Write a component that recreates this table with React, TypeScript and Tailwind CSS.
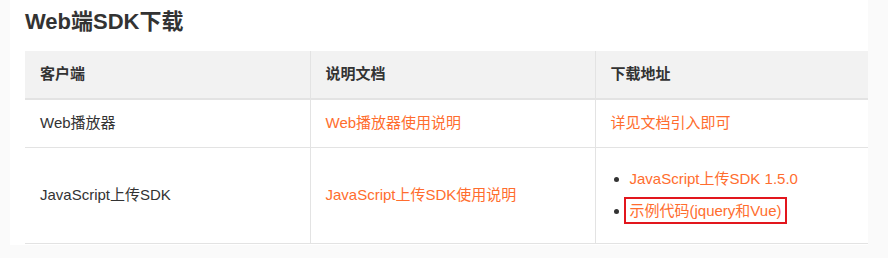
const rows = [
  { client: "Web播放器", doc: "Web播放器使用说明", links: null as string[] | null, plain: "详见文档引入即可" },
  { client: "JavaScript上传SDK", doc: "JavaScript上传SDK使用说明", links: ["JavaScript上传SDK 1.5.0", "示例代码(jquery和Vue)"], plain: "" },
];

const font = { fontFamily: '"Liberation Sans", "Noto Sans CJK SC", sans-serif' };

export default function App() {
  return (
    <div className="min-h-[258px] w-[888px] bg-[#fafafa] pl-[10px] pr-[20px]" style={font}>
      <div className="h-[245px] overflow-hidden bg-white pl-[15px]">
        <h2 className="pt-[8px] text-[22px] font-bold leading-[28px] text-[#333]">Web端SDK下载</h2>
        <table className="mt-[15px] w-[843px] table-fixed border-collapse text-[15px] text-[#333]">
          <colgroup>
            <col className="w-[285px]" />
            <col className="w-[285px]" />
            <col />
          </colgroup>
          <thead>
            <tr className="h-[48px] border-b-2 border-[#e3e3e3] bg-[#f2f2f2]">
              <th className="px-[15px] text-left font-bold">客户端</th>
              <th className="border-l border-[#e3e3e3] px-[15px] text-left font-bold">说明文档</th>
              <th className="border-l border-[#e3e3e3] px-[15px] text-left font-bold">下载地址</th>
            </tr>
          </thead>
          <tbody>
            {rows.map((r) => (
              <tr key={r.client} className={`border-b border-[#e3e3e3] ${r.links ? "h-[96px]" : "h-[48px]"}`}>
                <td className="px-[15px]">{r.client}</td>
                <td className="border-l border-[#e3e3e3] px-[15px] text-[#ff6d2e]">{r.doc}</td>
                <td className="border-l border-[#e3e3e3] px-[15px] text-[#ff6d2e]">
                  {r.links ? (
                    <ul className="list-disc pl-[19px] marker:text-[#333]">
                      {r.links.map((l, i) => (
                        <li key={l} className="leading-[32px]">
                          {i === 1 ? (
                            <span className="-ml-[6px] border-2 border-[#e2161d] px-[4px] py-[3px]">{l}</span>
                          ) : (
                            l
                          )}
                        </li>
                      ))}
                    </ul>
                  ) : (
                    r.plain
                  )}
                </td>
              </tr>
            ))}
          </tbody>
        </table>
      </div>
    </div>
  );
}
